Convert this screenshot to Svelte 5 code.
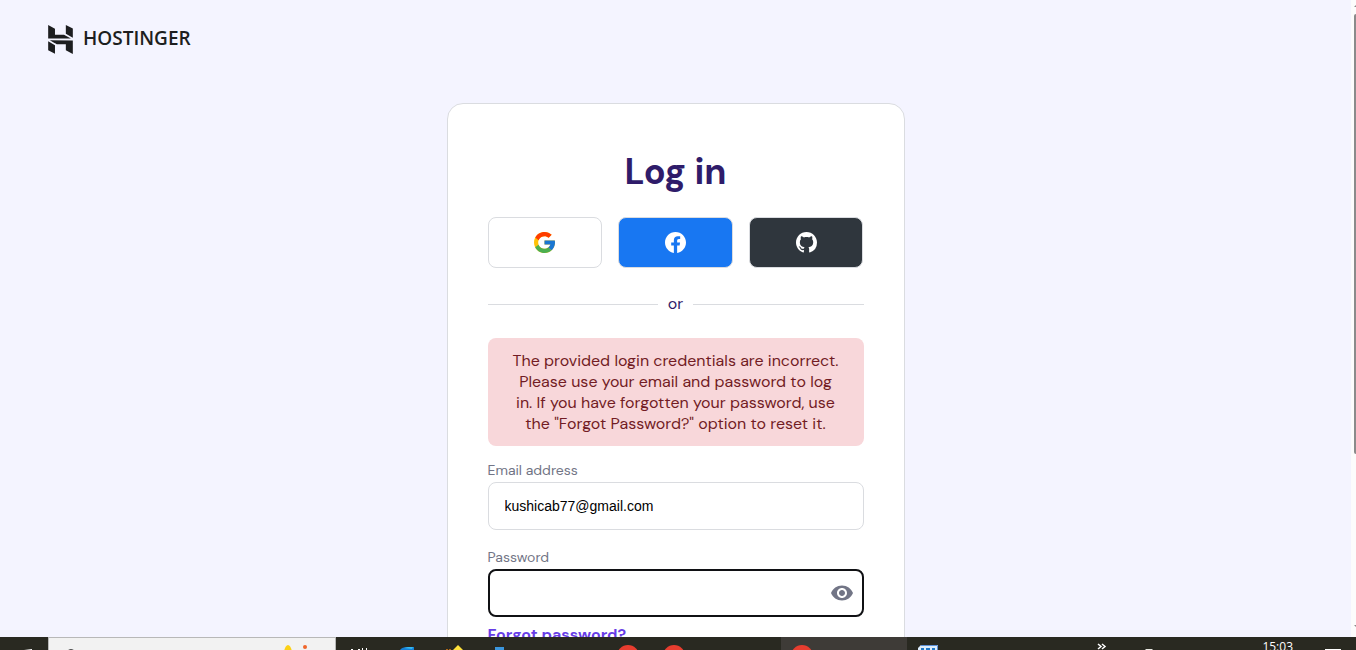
<script lang="ts">
  let email = $state('kushicab77@gmail.com');
  let password = $state('');
  let showPassword = $state(false);

  function handleSubmit(e: SubmitEvent) {
    e.preventDefault();
  }
</script>

<div class="screen">
  <div class="browser">
    <div class="page">
      <header class="header">
        <a class="logo" href="#home">
          <svg viewBox="1.8 0 20.4 24" width="25" height="29" aria-hidden="true">
            <path fill="currentColor" d="M16.415 0v7.16l5.785 3.384V2.949L16.415 0ZM1.8 0v11.237h18.815L14.89 8.09l-7.457-.003V3.024L1.8 0Zm14.615 20.894v-5.019l-7.514-.005c.007.033-5.82-3.197-5.82-3.197l19.119.091V24l-5.785-3.106ZM1.8 13.551v7.343l5.633 2.949v-6.988L1.8 13.551Z" />
          </svg>
          <span>HOSTINGER</span>
        </a>
      </header>

      <main class="card">
        <h1>Log in</h1>

        <div class="socials">
          <button class="social" type="button" aria-label="Google">
            <svg viewBox="4 4 40 40" width="21" height="21">
              <path fill="#FFC107" d="M43.611 20.083H42V20H24v8h11.303c-1.649 4.657-6.08 8-11.303 8-6.627 0-12-5.373-12-12s5.373-12 12-12c3.059 0 5.842 1.154 7.961 3.039l5.657-5.657C34.046 6.053 29.268 4 24 4 12.955 4 4 12.955 4 24s8.955 20 20 20 20-8.955 20-20c0-1.341-.138-2.65-.389-3.917z" />
              <path fill="#FF3D00" d="M6.306 14.691l6.571 4.819C14.655 15.108 18.961 12 24 12c3.059 0 5.842 1.154 7.961 3.039l5.657-5.657C34.046 6.053 29.268 4 24 4 16.318 4 9.656 8.337 6.306 14.691z" />
              <path fill="#4CAF50" d="M24 44c5.166 0 9.86-1.977 13.409-5.192l-6.19-5.238C29.211 35.091 26.715 36 24 36c-5.202 0-9.619-3.317-11.283-7.946l-6.522 5.025C9.505 39.556 16.227 44 24 44z" />
              <path fill="#1976D2" d="M43.611 20.083H42V20H24v8h11.303c-.792 2.237-2.231 4.166-4.087 5.571l6.193 5.238C36.971 39.205 44 34 44 24c0-1.341-.138-2.65-.389-3.917z" />
            </svg>
          </button>
          <button class="social facebook" type="button" aria-label="Facebook">
            <svg viewBox="0 0 24 24" width="21" height="21">
              <path fill="#fff" d="M24 12.073c0-6.627-5.373-12-12-12s-12 5.373-12 12c0 5.99 4.388 10.954 10.125 11.854v-8.385H7.078v-3.47h3.047V9.43c0-3.007 1.792-4.669 4.533-4.669 1.312 0 2.686.235 2.686.235v2.953H15.83c-1.491 0-1.956.925-1.956 1.874v2.25h3.328l-.532 3.47h-2.796v8.385C19.612 23.027 24 18.062 24 12.073z" />
            </svg>
          </button>
          <button class="social github" type="button" aria-label="GitHub">
            <svg viewBox="0 0 16 16" width="21" height="21">
              <path fill="#fff" d="M8 0C3.58 0 0 3.58 0 8c0 3.54 2.29 6.53 5.47 7.59.4.07.55-.17.55-.38 0-.19-.01-.82-.01-1.49-2.01.37-2.53-.49-2.69-.94-.09-.23-.48-.94-.82-1.13-.28-.15-.68-.52-.01-.53.63-.01 1.08.58 1.23.82.72 1.21 1.87.87 2.33.66.07-.52.28-.87.51-1.07-1.78-.2-3.64-.89-3.64-3.95 0-.87.31-1.59.82-2.15-.08-.2-.36-1.02.08-2.12 0 0 .67-.21 2.2.82.64-.18 1.32-.27 2-.27s1.36.09 2 .27c1.53-1.04 2.2-.82 2.2-.82.44 1.1.16 1.92.08 2.12.51.56.82 1.27.82 2.15 0 3.07-1.87 3.75-3.65 3.95.29.25.54.73.54 1.48 0 1.07-.01 1.93-.01 2.2 0 .21.15.46.55.38A8.01 8.01 0 0 0 16 8c0-4.42-3.58-8-8-8z" />
            </svg>
          </button>
        </div>

        <div class="divider"><span>or</span></div>

        <div class="alert" role="alert">
          The provided login credentials are incorrect. Please use your email and password to log in. If you have forgotten your password, use the "Forgot Password?" option to reset it.
        </div>

        <form onsubmit={handleSubmit}>
          <div class="field">
            <label for="email">Email address</label>
            <input id="email" type="email" bind:value={email} />
          </div>
          <div class="field">
            <label for="password">Password</label>
            <div class="password-box">
              <input id="password" type={showPassword ? 'text' : 'password'} bind:value={password} />
              <button class="eye" type="button" aria-label="Show password" onclick={() => (showPassword = !showPassword)}>
                <svg viewBox="0 0 24 24" width="24" height="24">
                  <path fill="currentColor" d="M12 4.5C7 4.5 2.73 7.61 1 12c1.73 4.39 6 7.5 11 7.5s9.27-3.11 11-7.5c-1.73-4.39-6-7.5-11-7.5zM12 17c-2.76 0-5-2.24-5-5s2.24-5 5-5 5 2.24 5 5-2.24 5-5 5zm0-8c-1.66 0-3 1.34-3 3s1.34 3 3 3 3-1.34 3-3-1.34-3-3-3z" />
                </svg>
              </button>
            </div>
          </div>
          <a class="forgot" href="#forgot">Forgot password?</a>
        </form>
      </main>
    </div>

    <div class="scrollbar">
      <svg viewBox="0 0 2 14" width="2" height="14"><path fill="#8b8b8b" d="M2 5v2H0z" /></svg>
      <div class="thumb"></div>
      <div class="track"></div>
      <svg viewBox="0 0 2 14" width="2" height="14"><path fill="#8b8b8b" d="M0 2h2v2z" /></svg>
    </div>
  </div>

  <footer class="taskbar">
    <div class="start">
      <svg viewBox="0 0 48 13" width="48" height="13"><path fill="#fff" d="M24 13l8-1v1z" /></svg>
    </div>
    <div class="search">
      <svg viewBox="0 0 48 13" width="48" height="13"><circle cx="22" cy="17" r="5" fill="none" stroke="#111" stroke-width="1.5" /></svg>
      <svg viewBox="0 0 60 13" width="60" height="13">
        <path fill="#fcd116" d="M9 13c1-3 2-6 4-6s3 3 4 6z" />
        <circle cx="30" cy="9" r="2" fill="#f0662b" />
      </svg>
    </div>
    <div class="apps">
      <svg viewBox="0 0 48 13" width="48" height="13"><path fill="#fff" d="M15 12h2v1h-2zM22 12h2v1h-2zM26 11h1v2h-1zM30 11h1v2h-1z" /></svg>
      <svg viewBox="0 0 48 13" width="48" height="13">
        <path fill="#1681d8" d="M16 13c1-2 4-3 8-3h6v3z" />
        <path fill="#35b9ef" d="M20 11l4-1h5l-1 2z" />
      </svg>
      <svg viewBox="0 0 48 13" width="48" height="13">
        <path fill="#ffe13b" d="M21 13l5-5 5 5z" />
        <path fill="#ae6716" d="M14 12h2v1h-2zM17 12h2v1h-2z" />
      </svg>
      <svg viewBox="0 0 40 13" width="40" height="13"><path fill="#3b96dd" d="M15 10h9v3h-9z" /></svg>
    </div>
    <div class="windows">
      <svg viewBox="0 0 46 13" width="46" height="13"><circle cx="23" cy="19" r="11" fill="#e83d2f" /></svg>
      <svg viewBox="0 0 46 13" width="46" height="13"><circle cx="23" cy="19" r="11" fill="#e83d2f" /></svg>
    </div>
    <div class="active-window">
      <svg viewBox="0 0 42 13" width="42" height="13"><circle cx="21" cy="19" r="11" fill="#e83d2f" /></svg>
    </div>
    <svg viewBox="0 0 42 13" width="42" height="13">
      <path fill="#dcebfb" d="M11 13v-2l3-3h17v5z" />
      <path fill="#1f78c8" d="M14 11h3v2h-3zM19 11h4v2h-4zM25 11h3v2h-3z" />
      <path fill="none" stroke="#5d8fd6" d="M14 8.500h16.500V13" />
    </svg>
    <div class="tray">
      <svg viewBox="0 0 10 13" width="10" height="13"><path fill="none" stroke="#fff" stroke-width="1.5" d="M1 7l3 2.500L1 12M5 7l3 2.500L5 12" /></svg>
      <svg viewBox="0 0 14 13" width="14" height="13"><path fill="#e8e8e2" d="M3 13l1-1h6l1 1z" /></svg>
      <span class="clock">15:03</span>
      <svg viewBox="0 0 16 13" width="16" height="13"><path fill="#fff" d="M0 12h16v1H0z" /></svg>
    </div>
  </footer>
</div>

<style>
  :global(body) { margin: 0; }
  .screen {
    height: 100vh; display: flex; flex-direction: column; overflow: hidden;
    font-family: 'DM Sans', Inter, 'Liberation Sans', sans-serif; font-size: 16px; color: #2f1c6a;
  }
  .screen * { box-sizing: border-box; }
  .browser { flex: 1; min-height: 0; display: flex; background: #f4f4ff; }
  .page { flex: 1; overflow: hidden; }

  .header { display: flex; padding: 24px 48px; }
  .logo {
    display: flex; align-items: center; gap: 10px; height: 30px; color: #1d1e20; text-decoration: none;
    font-family: 'Open Sans', sans-serif; font-size: 19px; line-height: 28px; font-weight: 600;
  }
  .logo span { padding-bottom: 2px; }

  .card {
    width: 458px; max-width: 100%; margin: 25px auto 40px; padding: 40px;
    background: #fff; border: 1px solid #dadce0; border-radius: 16px;
  }
  h1 { margin: 0 0 21px; padding-top: 4px; font-size: 36px; line-height: 48px; font-weight: 700; text-align: center; }

  .socials { display: grid; grid-template-columns: repeat(3, 1fr); gap: 16px; }
  .social {
    display: flex; align-items: center; justify-content: center; height: 51px; padding: 0;
    background: #fff; border: 1px solid #dadce0; border-radius: 8px; cursor: pointer;
  }
  .facebook { background: #1877f2; }
  .github { background: #2f363d; }

  .divider { display: flex; align-items: center; gap: 10px; margin: 24px 0 22px; line-height: 24px; }
  .divider::before, .divider::after { content: ''; flex: 1; height: 1px; background: #dadce0; }

  .alert {
    padding: 12px 24px; border-radius: 8px; background: #f8d7da; color: #721c24;
    line-height: 21px; text-align: center;
  }

  form { padding-top: 14px; }
  .field { display: flex; flex-direction: column; margin-bottom: 17px; }
  .field:last-of-type { margin-bottom: 8px; }
  label { font-size: 14px; line-height: 20px; padding-bottom: 2px; color: #727586; }
  input {
    width: 100%; height: 48px; padding: 0 16px; border: 1px solid #dadce0; border-radius: 8px; outline: none;
    background: #fff; color: #000; font-family: 'Liberation Sans', Arial, sans-serif; font-size: 14px;
  }
  .password-box { display: flex; align-items: center; height: 48px; border: 2px solid #101114; border-radius: 8px; padding-right: 8px; }
  .password-box input { flex: 1; height: 100%; border: 0; }
  .eye { display: flex; padding: 0; border: 0; background: none; color: #727586; cursor: pointer; }
  .forgot { display: block; line-height: 20px; font-weight: 700; color: #673de6; text-decoration: none; }

  .scrollbar { width: 5px; display: flex; flex-direction: column; align-items: flex-end; background: #fcfcfc; }
  .thumb { flex: 440; width: 2px; background: #8b8b8b; border-radius: 2px 0 0 2px; }
  .track { flex: 169; }

  .taskbar { display: flex; height: 13px; overflow: hidden; background: #292921; }
  .taskbar svg { display: block; flex-shrink: 0; }
  .search { width: 288px; display: flex; justify-content: space-between; background: #f2f2f2; border: 1px solid #b8b8b8; border-bottom: 0; }
  .apps { display: flex; }
  .windows { display: flex; padding: 0 84px 0 85px; }
  .active-window { width: 126px; background: #3e3b37; }
  .tray { margin-left: auto; display: flex; padding-right: 15px; }
  .tray svg:first-child { margin-right: 35px; }
  .clock { margin: 0 32px 0 106px; color: #fff; font-family: 'Open Sans', sans-serif; font-size: 12px; line-height: 20px; }
</style>
